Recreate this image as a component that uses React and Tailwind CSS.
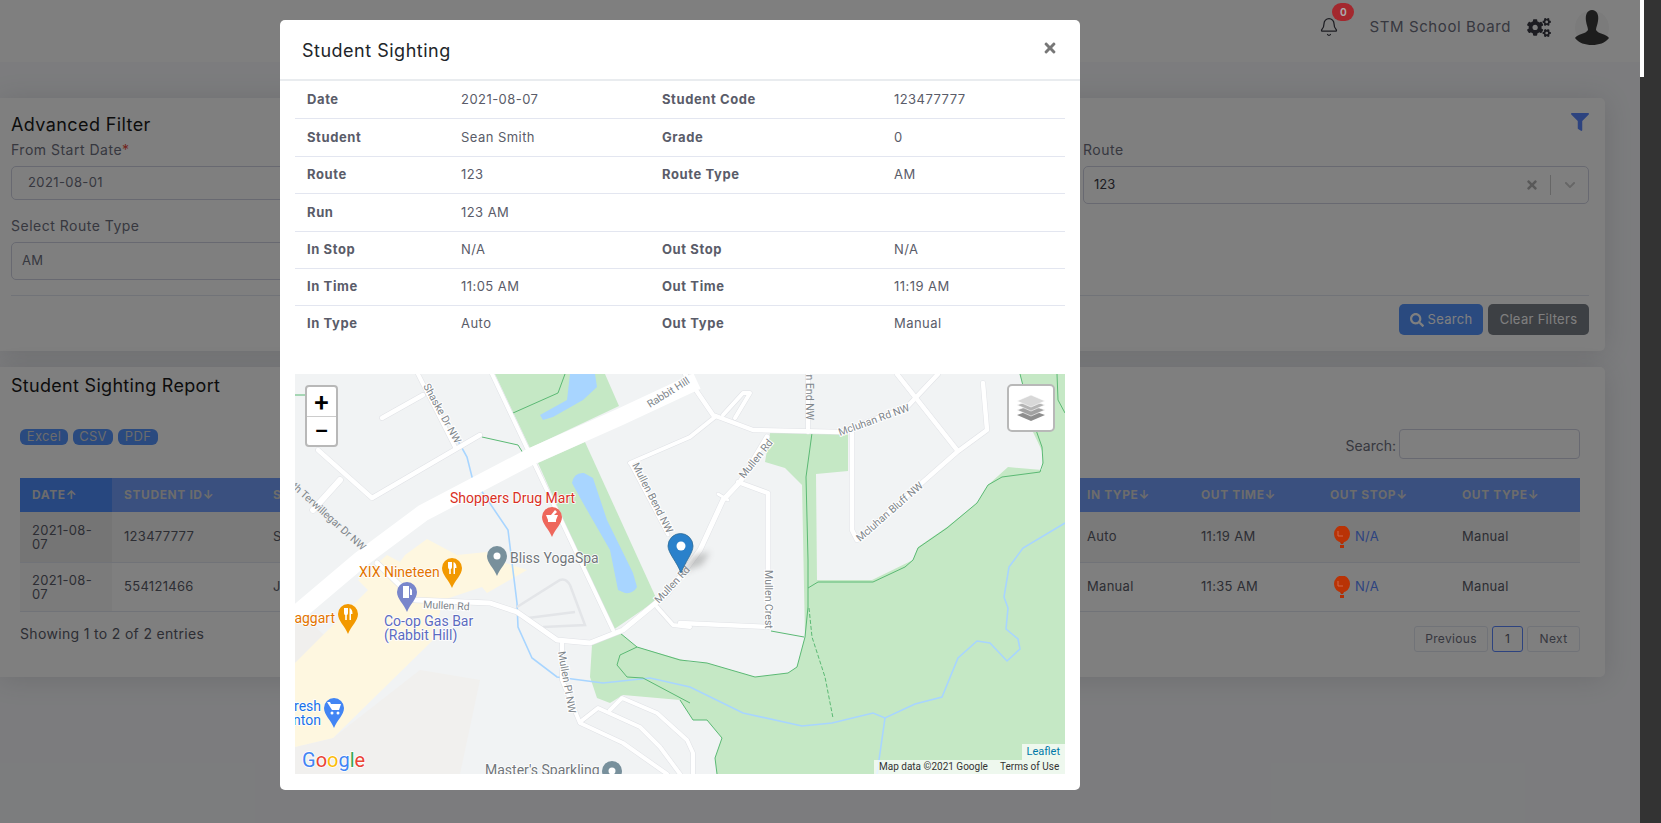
import React from "react";
import { FaCogs, FaFilter, FaSearch, FaTimes, FaChevronDown } from "react-icons/fa";
import { Bell } from "lucide-react";

const roads = [
  ["M418,374 L455,447", 4], ["M382,418 L423,395", 4.5], ["M318,450 L372,498 L480,435", 4.5],
  ["M313,510 L340,480", 6], ["M492,374 L613,630", 4],
  ["M377,563 L415,600 L490,603 L517,612 L557,640 L590,643 L623,630 L668,593 L700,550 L723,500 L740,482 L767,437", 5],
  ["M685,374 L713,415 L753,430 L840,432 L907,407 L938,374", 4.5], ["M723,415 L743,393 L750,393 L735,418", 4],
  ["M630,463 L690,437 L715,417", 4], ["M630,463 L668,535", 3], ["M808,374 L808,432", 4],
  ["M852,433 L852,530 L857,540 L957,452 L987,430 L983,383", 4.5], ["M897,374 L957,450", 4.5],
  ["M738,482 L768,493 L768,627 L680,623", 4.5], ["M657,607 L673,625 L690,627", 4],
  ["M562,643 L562,680 L580,723 L623,743 L667,774", 4], ["M580,722 L598,708 L640,727 L660,747 L680,774", 4],
  ["M610,710 L622,698 L657,713 L687,740 L693,753 L693,774", 4], ["M718,494 L728,500", 3],
];
const greenLines = [
  "M812,433 L806,477 L808,560 L808,607 L805,637 L797,667 L788,673 L755,677 L707,663 L680,660 L637,647 L620,633",
  "M637,647 L620,655 L617,665 L627,677 L643,678 L690,703",
  "M680,700 L693,720 L707,720 L722,738 L715,758 L717,774",
  "M808,588 L818,582 L873,582 L905,567 L913,560 L918,548 L947,528 L977,503 L988,485 L1002,477 L1040,472 L1043,463 L1042,447 L1030,413 L1020,374",
  "M1057,374 L1058,400 L1065,413", "M771,631 L804,637", "M513,413 L558,393 L565,374",
  "M482,437 L518,445 L523,453", "M295,395 L307,395",
];
const streams = [
  "M452,430 L467,457 L472,477 L508,530 L517,603 L518,627 L532,658 L557,677 L603,683 L650,678 L690,687 L743,713 L802,726 L832,723 L873,713 L885,718 L915,704 L942,697 L958,658 L977,641 L990,643 L1007,661 L1020,649 L1018,639 L1006,629 L1008,608 L1004,597 L1009,567 L1023,548 L1065,523",
  "M885,718 L877,774",
];
const labels = [
  ["Shaske Dr NW", 423, 386, 61], ["Rabbit Hill", 650, 408, -32], ["Mullen Rd", 423, 608, 3],
  ["Mullen Pl NW", 558, 652, 80], ["Mullen Bend NW", 632, 465, 63], ["Mullen Rd", 659, 604, -47],
  ["Mullen Rd", 744, 479, -51], ["Mullen Crest", 765, 570, 90], ["Mcluhan Rd NW", 840, 436, -20],
  ["Mcluhan Bluff NW", 860, 542, -41],
];
const pois = [
  ["Shoppers Drug Mart", 450, 503, "#d93025", "start"], ["Bliss YogaSpa", 510, 563, "#70757a", "start"],
  ["XIX Nineteen", 359, 577, "#e37400", "start"], ["Taggart", 335, 623, "#e37400", "end"],
  ["Co-op Gas Bar", 384, 626, "#5c6bc0", "start"], ["(Rabbit Hill)", 384, 640, "#5c6bc0", "start"],
  ["Fresh", 321, 711, "#1a73e8", "end"], ["Edmonton", 321, 725, "#1a73e8", "end"],
  ["Master's Sparkling", 485, 775, "#70757a", "start"],
];
const pins = [
  [552, 517, "#ee675c", "mortar"], [452, 568, "#f29900", "food"], [348, 614, "#f29900", "food"],
  [497, 556, "#78909c", "dot"], [407, 592, "#7986cb", "fuel"], [334, 708, "#4285f4", "cart"], [612, 771, "#78909c", "dot"],
];

function PinGlyph({ x, y, kind }) {
  if (kind === "food") {
    return <path d={`M${x - 4},${y - 6} L${x - 4},${y - 1} Q${x - 4},${y + 1} ${x - 2.800},${y + 1} L${x - 2.800},${y + 6} L${x - 1.200},${y + 6} L${x - 1.200},${y + 1} Q${x},${y + 1} ${x},${y - 1} L${x},${y - 6} Z M${x + 1.500},${y + 6} L${x + 1.500},${y - 6} Q${x + 4.500},${y - 5} ${x + 4.500},${y} L${x + 3},${y} L${x + 3},${y + 6} Z`} fill="#fff" />;
  }
  if (kind === "mortar") {
    return <path d={`M${x - 6},${y - 2} L${x + 6},${y - 2} L${x + 4},${y + 3} L${x + 4},${y + 5} L${x - 4},${y + 5} L${x - 4},${y + 3} Z M${x - 1},${y - 2} L${x + 3},${y - 7} L${x + 5},${y - 5} L${x + 2},${y - 2} Z`} fill="#fff" />;
  }
  if (kind === "fuel") {
    return <path d={`M${x - 4},${y - 6} L${x + 2},${y - 6} L${x + 2},${y + 6} L${x - 4},${y + 6} Z M${x + 3},${y - 4} L${x + 5},${y - 2} L${x + 5},${y + 3} L${x + 3},${y + 3} Z`} fill="#fff" />;
  }
  if (kind === "cart") {
    return (
      <g fill="#fff">
        <path d={`M${x - 7},${y - 6} L${x - 4},${y - 6} L${x - 3},${y - 4} L${x + 7},${y - 4} L${x + 5},${y + 2} L${x - 2},${y + 2} Z`} />
        <circle cx={x - 2} cy={y + 5} r="1.500" /><circle cx={x + 4} cy={y + 5} r="1.500" />
      </g>
    );
  }
  return <circle cx={x} cy={y} r="3.500" fill="#fff" />;
}

function StreetMap() {
  return (
    <svg viewBox="295 374 770 400" className="block h-[400px] w-[770px]" style={{ fontFamily: "Roboto, sans-serif" }}>
      <rect x="295" y="374" width="770" height="400" fill="#f1f3f4" />
      <polygon points="295,610 330,640 295,663" fill="#f0efed" />
      <polygon points="333,738 420,670 480,680 460,774 295,774 295,747" fill="#f1f0ee" />
      <polygon points="295,663 368,590 358,580 387,555 400,562 405,555 427,539 457,555 487,552 490,558 527,570 487,593 482,587 443,600 433,640 333,738 295,747" fill="#fef7e0" />
      <g fill="#c5e8c5">
        <polygon points="495,374 605,374 619,406 530,448" />
        <polygon points="538,463 585,442 657,600 613,630" />
        <polygon points="620,633 637,647 690,662 707,663 755,677 788,673 797,667 805,637 802,485 785,468 765,462 770,433 848,433 848,471 816,474 817,580 872,580 913,560 918,547 947,527 977,503 988,485 1008,467 1042,470 1043,453 1033,432 1020,374 1065,374 1065,774 717,774 715,758 722,738 707,720 693,720 680,700 623,695 610,703 597,698 590,677 592,645" />
      </g>
      <g fill="#a8d5ff">
        <polygon points="540,415 567,400 570,374 595,374 597,387 583,400 553,417 543,420" />
        <path d="M572,483 Q574,472 584,473 L593,478 L607,520 L633,573 L637,587 Q633,594 625,593 L618,590 L610,550 L583,503 Z" />
      </g>
      {streams.map((d) => <path key={d} d={d} fill="none" stroke="#a8d5ff" strokeWidth="1.6" />)}
      {greenLines.map((d) => <path key={d} d={d} fill="none" stroke="#5bb974" strokeWidth="1" />)}
      <path d="M809,608 L812,637 L825,677 L833,718" fill="none" stroke="#5bb974" strokeWidth="1" strokeDasharray="4 2" />
      <path d="M517,607 L560,580 Q566,578 570,585 L585,625 L543,627 M528,618 L575,612" fill="none" stroke="#e3e5e8" strokeWidth="2.500" />
      {roads.map(([d, w]) => <path key={d} d={d} fill="none" stroke="#e0e2e6" strokeWidth={w + 1} strokeLinejoin="round" strokeLinecap="round" />)}
      {roads.map(([d, w]) => <path key={d + "w"} d={d} fill="none" stroke="#fff" strokeWidth={w} strokeLinejoin="round" strokeLinecap="round" />)}
      <path d="M295,615 L360,560 L423,513 L530,457 L620,417 L697,381" fill="none" stroke="#fff" strokeWidth="17" />
      {labels.map(([t, x, y, a]) => (
        <text key={t + x} x={x} y={y} transform={`rotate(${a} ${x} ${y})`} fontSize="10.500" fill="#80868b" stroke="#fff" strokeWidth="2" paintOrder="stroke">{t}</text>
      ))}
      <text x="362" y="551" transform="rotate(42 362 551)" textAnchor="end" fontSize="10.500" fill="#80868b">South Terwillegar Dr NW</text>
      <text x="806" y="420" transform="rotate(90 806 420)" textAnchor="end" fontSize="10.500" fill="#80868b">Mcluhan End NW</text>
      {pins.map(([x, y, c, kind]) => (
        <g key={x}>
          <path d={`M${x},${y + 20} C${x - 3},${y + 12} ${x - 10},${y + 7} ${x - 10},${y} A10,10 0 1 1 ${x + 10},${y} C${x + 10},${y + 7} ${x + 3},${y + 12} ${x},${y + 20} Z`} fill={c} />
          <PinGlyph x={x} y={y} kind={kind} />
        </g>
      ))}
      {pois.map(([t, x, y, c, anchor]) => (
        <text key={t} x={x} y={y} textAnchor={anchor} fontSize="14" fill={c} stroke="#fff" strokeWidth="1.500" paintOrder="stroke">{t}</text>
      ))}
      <polygon points="680,573 694,555 710,552 702,565" fill="#888" opacity="0.45" style={{ filter: "blur(3px)" }} />
      <path d="M681,573 C677,562 668,553 668,546 A12.5,12.5 0 1 1 693,546 C693,553 685,562 681,573 Z" fill="#2a81cb" stroke="#2e6c97" strokeWidth="0.800" />
      <circle cx="681" cy="546" r="4.500" fill="#fff" />
      <text x="302" y="767" fontSize="20" stroke="#fff" strokeWidth="1.500" paintOrder="stroke">
        <tspan fill="#4285f4">G</tspan><tspan fill="#ea4335">o</tspan><tspan fill="#fbbc05">o</tspan><tspan fill="#4285f4">g</tspan><tspan fill="#34a853">l</tspan><tspan fill="#ea4335">e</tspan>
      </text>
    </svg>
  );
}

const rows = [
  ["Date", "2021-08-07", "Student Code", "123477777", "h-[37px]"],
  ["Student", "Sean Smith", "Grade", "0", "h-[38px]"],
  ["Route", "123", "Route Type", "AM", "h-[37px]"],
  ["Run", "123 AM", "", "", "h-[38px]"],
  ["In Stop", "N/A", "Out Stop", "N/A", "h-[37px]"],
  ["In Time", "11:05 AM", "Out Time", "11:19 AM", "h-[37px]"],
  ["In Type", "Auto", "Out Type", "Manual", "h-[36px]"],
];

const head = [
  ["DATE↑", "w-[92px] bg-[#4e8eff]"], ["STUDENT ID↓", "w-[149px]"], ["STUDENT↓", "w-[165px]"], ["ROUTE↓", "w-[160px]"],
  ["RUN↓", "w-[160px]"], ["IN TIME↓", "w-[160px]"], ["IN STOP↓", "w-[169px]"], ["IN TYPE↓", "w-[114px]"],
  ["OUT TIME↓", "w-[129px]"], ["OUT STOP↓", "w-[132px]"], ["OUT TYPE↓", "w-[130px]"],
];
const report = [
  ["123477777", "Sean Smith", "123", "123 AM", "11:05 AM", "Auto", "11:19 AM", "Manual"],
  ["554121466", "John Smith", "123", "123 AM", "11:20 AM", "Manual", "11:35 AM", "Manual"],
];

function Balloon() {
  return (
    <svg viewBox="0 0 16 22" className="relative z-20 h-[22px] w-4 shrink-0">
      <ellipse cx="8" cy="8" rx="8" ry="8.500" fill="#b93306" />
      <path d="M6,16 L10,16 L9,18 L7,18 Z" fill="#b03006" />
      <rect x="6" y="19" width="4" height="3" fill="#b03006" />
      <path d="M4,5 L4,10 L9,10" fill="none" stroke="#d0684a" strokeWidth="1" />
    </svg>
  );
}

function Field({ label, req, value, tall }) {
  return (
    <div className="flex flex-col">
      <label className="h-[26px] text-[14px] leading-5 tracking-[0.5px] text-[#6e707e]">{label}{req && <span className="text-[#e74a3b]">*</span>}</label>
      <div className={`${tall ? "h-[38px] pl-2.5" : "h-[34px] pl-4"} flex items-center rounded-[5px] border border-[#d1d3e2] text-[13px] tracking-[0.4px] text-[#6e707e]`}>{value}</div>
    </div>
  );
}

export default function App() {
  return (
    <div className="flex h-[823px] w-[1661px] overflow-hidden [font-family:Inter,sans-serif]">
      <div className="relative h-full w-[1640px] bg-[#f8f9fc]">
        <header className="flex h-[62px] items-center justify-end bg-white pb-2 pr-[31px]">
          <div className="relative mr-[30px] text-[#3a3b45]">
            <Bell className="h-5 w-5" strokeWidth={1.500} />
            <span className="absolute -right-[15px] -top-[14px] z-20 flex h-[18px] w-[22px] items-center justify-center rounded-full bg-[#a3282e] text-[10px] font-bold text-[#aaa]">0</span>
          </div>
          <span className="mr-4 text-[15px] tracking-[0.6px] text-[#6e707e]">STM School Board</span>
          <FaCogs className="mr-6 h-[19px] w-6 text-[#3a3b45]" />
          <svg viewBox="0 0 34 35" className="h-[35px] w-[34px]">
            <circle cx="17" cy="17.500" r="17" fill="#f6f6f6" />
            <path d="M17,0 C22,0 24,5 23,11 C22.500,15 21,17 21,20 C23,24 32,24 34,28 C30,33 24,35 17,35 C10,35 4,33 0,28 C2,24 11,24 13,20 C13,17 11.500,15 11,11 C10,5 12,0 17,0 Z" fill="#3a3a3a" />
          </svg>
        </header>

        <main className="flex w-[1605px] flex-col gap-4 pt-9">
          <section className="rounded-r-[5px] bg-white pb-4 pl-[11px] pr-4 pt-[15px] shadow-[0_2px_28px_rgba(58,59,69,0.15)]">
            <div className="flex h-[27px] items-start justify-between">
              <h2 className="text-[18px] leading-6 tracking-[0.4px] text-[#1a1a1a]">Advanced Filter</h2>
              <FaFilter className="h-[18px] w-[18px] text-[#5b87ff]" />
            </div>
            <div className="grid grid-cols-3 gap-x-[30px] gap-y-[2px]">
              <div className="h-[74px]"><Field label="From Start Date" req value="2021-08-01" /></div>
              <div className="h-[74px]"><Field label="To End Date" req value="2021-08-07" /></div>
              <div className="h-[74px]">
                <label className="block h-[26px] text-[14px] leading-5 tracking-[0.5px] text-[#6e707e]">Route</label>
                <div className="flex h-[38px] items-center rounded-[5px] border border-[#d1d3e2] pl-2.5 text-[13px] text-[#3a3b45]">
                  <span className="flex-1">123</span>
                  <FaTimes className="mr-[11px] h-3.5 w-3.5 text-[#b3b3b3]" />
                  <span className="mr-[13px] h-5 w-px bg-[#ccc]" />
                  <FaChevronDown className="mr-3 h-3 w-3 text-[#ccc]" />
                </div>
              </div>
              <Field label="Select Route Type" value="AM" tall />
            </div>
            <hr className="mt-[15px] border-[#e3e6f0]" />
            <div className="mt-2 flex justify-end gap-[5px]">
              <button className="flex h-[31px] w-[84px] items-center justify-center gap-1 rounded-[5px] bg-[#5494ff] text-[13px] tracking-[0.3px] text-[#fff]"><FaSearch className="h-3.5 w-3.5" />Search</button>
              <button className="h-[31px] w-[101px] rounded-[5px] bg-[#7a8088] text-[13px] tracking-[0.3px] text-[#fff]">Clear Filters</button>
            </div>
          </section>

          <section className="rounded-r-[5px] bg-white pb-[25px] pl-5 pr-[25px] pt-[7px] shadow-[0_2px_28px_rgba(58,59,69,0.15)]">
            <h2 className="-ml-[9px] text-[18px] leading-6 tracking-[0.3px] text-[#1a1a1a]">Student Sighting Report</h2>
            <div className="mt-[31px] flex h-[30px] items-start justify-between">
              <div className="flex gap-[5px]">
                {[["Excel", "w-12"], ["CSV", "w-10"], ["PDF", "w-10"]].map(([t, w]) => (
                  <span key={t} className={`${w} flex h-4 items-center justify-center rounded-md bg-[#5494ff] text-[13px] tracking-[0.3px] text-[#d8d8d8]`}>{t}</span>
                ))}
              </div>
              <label className="flex items-center gap-[3px] text-[14px] text-[#6e707e]"><span className="pt-[3px]">Search:</span><input className="h-[30px] w-[181px] rounded-[4px] border border-[#d1d3e2]" /></label>
            </div>
            <table className="mt-[19px] w-[1560px] table-fixed border-collapse text-[13px] tracking-[0.3px] text-[#5a5c69]">
              <thead className="bg-[#74a0ff] text-[12px] font-bold tracking-[0.6px] text-[#d8d8d8]">
                <tr className="h-[34px]">
                  {head.map(([t, c]) => <th key={t} className={`${c} pl-3 text-left font-bold`}>{t}</th>)}
                </tr>
              </thead>
              <tbody>
                {report.map((r, i) => (
                  <tr key={r[0]} className={`${i === 0 ? "h-[50px] bg-[#f4f4f4]" : "h-[49px] bg-white"} border-b border-[#e3e6f0]`}>
                    <td className={`${i === 0 ? "bg-[#ebebeb]" : "bg-[#f6f6f6]"} px-3 leading-[14px]`}>2021-08-07</td>
                    <td className="pl-3">{r[0]}</td>
                    <td className="pl-3">{r[1]}</td>
                    <td className="pl-3">{r[2]}</td>
                    <td className="pl-3">{r[3]}</td>
                    <td className="pl-3">{r[4]}</td>
                    <td className="pl-3">N/A</td>
                    <td className="pl-3">{r[5]}</td>
                    <td className="pl-3">{r[6]}</td>
                    <td className="pl-4"><div className="flex items-center gap-[5px] text-[#5b87ff]"><Balloon />N/A</div></td>
                    <td className="pl-3">{r[7]}</td>
                  </tr>
                ))}
              </tbody>
            </table>
            <div className="mt-[14px] flex h-[26px] items-start justify-between text-[14px] tracking-[0.33px] text-[#5a5c69]">
              <span className="leading-4">Showing 1 to 2 of 2 entries</span>
              <div className="flex gap-1 text-[12px]">
                <span className="flex h-[26px] w-[74px] items-center justify-center rounded-[3px] border border-[#e3e6f0] text-[#6e707e]">Previous</span>
                <span className="flex h-[26px] w-[31px] items-center justify-center rounded-[3px] border border-[#5b87ff]">1</span>
                <span className="flex h-[26px] w-[53px] items-center justify-center rounded-[3px] border border-[#e3e6f0] text-[#6e707e]">Next</span>
              </div>
            </div>
          </section>
        </main>

        <div className="absolute inset-0 z-10 bg-black/50" />
        <div className="absolute left-[280px] top-5 z-30 w-[800px] rounded-[5px] bg-white pb-4">
          <div className="flex h-[61px] items-center justify-between border-b-2 border-[#e9ecef] px-[22px]">
            <h3 className="pt-px text-[18px] tracking-[0.5px] text-[#212529]">Student Sighting</h3>
            <FaTimes className="mb-1 h-4 w-4 text-[#777]" />
          </div>
          <div className="px-[15px]">
            <table className="w-[770px] table-fixed border-collapse text-[13px] text-[#5a5c69]">
              <tbody>
                {rows.map(([a, b, c, d, h], i) => (
                  <tr key={a} className={`${h} ${i < 6 ? "border-b border-[#e3e6f0]" : ""}`}>
                    <th className="w-[166px] pl-[12px] pt-px text-left font-bold tracking-[0.6px]">{a}</th>
                    <td className="w-[201px] pl-0 pt-px text-left tracking-[0.45px]">{b}</td>
                    <th className="w-[232px] pt-px text-left font-bold tracking-[0.6px]">{c}</th>
                    <td className="pt-px text-left tracking-[0.45px]">{d}</td>
                  </tr>
                ))}
              </tbody>
            </table>
            <div className="relative mt-[33px] h-[400px] overflow-hidden">
              <StreetMap />
              <div className="absolute left-[10px] top-[11px] flex h-[62px] w-[33px] flex-col overflow-hidden rounded-[4px] border-2 border-[#b8b8b8] bg-white text-black">
                <span className="flex h-[30px] items-center justify-center border-b border-[#ccc] text-[26px] font-medium leading-none [font-family:Roboto,sans-serif]">+</span>
                <span className="flex flex-1 items-center justify-center text-[26px] font-medium leading-none [font-family:Roboto,sans-serif]">−</span>
              </div>
              <div className="absolute right-[10px] top-[10px] flex h-12 w-12 items-center justify-center rounded-[5px] border-2 border-[#b8b8b8] bg-white">
                <svg viewBox="0 0 28 26" className="h-[26px] w-7">
                  <path d="M14,15 L28,20 L14,26 L0,20 Z" fill="#8e8e8e" />
                  <path d="M14,10 L28,15 L14,21 L0,15 Z" fill="#a2a2a2" stroke="#fff" strokeWidth="0.600" />
                  <path d="M14,5 L28,10 L14,16 L0,10 Z" fill="#b4b4b4" stroke="#fff" strokeWidth="0.600" />
                  <path d="M14,0 L28,6 L14,12 L0,6 Z" fill="#d8d8d8" stroke="#fff" strokeWidth="0.600" />
                </svg>
              </div>
              <div className="absolute bottom-0 right-0 flex flex-col items-end text-[10px] leading-[14px] text-[#333] [font-family:Roboto,sans-serif]">
                <a className="bg-white/70 px-[5px] text-[11px] leading-4 text-[#0078a8]">Leaflet</a>
                <div className="flex w-[191px] bg-white/70 pl-[5px]">
                  <span className="w-[115px]">Map data ©2021 Google</span>
                  <span className="pl-[6px]">Terms of Use</span>
                </div>
              </div>
            </div>
          </div>
        </div>
      </div>
      <aside className="h-full w-[21px] bg-[#333]">
        <div className="h-[77px] w-1 bg-white" />
      </aside>
    </div>
  );
}
